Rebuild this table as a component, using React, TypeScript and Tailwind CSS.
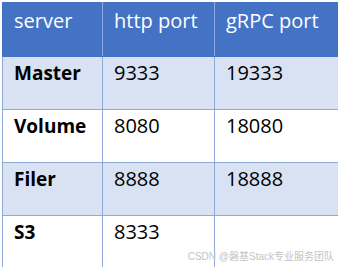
const rows = [
  { server: "Master", http: "9333", grpc: "19333" },
  { server: "Volume", http: "8080", grpc: "18080" },
  { server: "Filer", http: "8888", grpc: "18888" },
  { server: "S3", http: "8333", grpc: "" },
];

export default function App() {
  return (
    <div className="relative w-[338px] h-[267px] overflow-hidden bg-white pl-[2px] pt-[2px] font-['Open_Sans',sans-serif]">
      <table className="border-collapse table-fixed w-[352px] text-[20px] leading-[28px]">
        <colgroup>
          <col className="w-[100px]" />
          <col className="w-[112px]" />
          <col className="w-[140px]" />
        </colgroup>
        <thead>
          <tr className="h-[54px] bg-[#4472c4] text-white">
            <th className="border border-[#4472c4] border-r-[#8eaadb] align-top pt-[4px] pl-[11px] text-left font-normal">server</th>
            <th className="border border-[#4472c4] border-r-[#8eaadb] align-top pt-[4px] pl-[11px] text-left font-normal">http port</th>
            <th className="border border-[#4472c4] align-top pt-[4px] pl-[11px] text-left font-normal">gRPC port</th>
          </tr>
        </thead>
        <tbody>
          {rows.map((r, i) => (
            <tr key={r.server} className={`h-[53px] text-black ${i % 2 === 0 ? "bg-[#d9e2f3]" : "bg-white"}`}>
              <td className="border border-[#8eaadb] align-top pt-[2px] pl-[11px] font-bold text-[19px]">{r.server}</td>
              <td className="border border-[#8eaadb] align-top pt-[2px] pl-[11px]">{r.http}</td>
              <td className="border border-[#8eaadb] align-top pt-[2px] pl-[11px]">{r.grpc}</td>
            </tr>
          ))}
        </tbody>
      </table>
      <div className="absolute right-[4px] bottom-[3px] text-[10px] leading-[14px] text-[#c4c4c4] font-['Liberation_Sans','Noto_Sans_CJK_SC',sans-serif]">
        CSDN @磐基Stack专业服务团队
      </div>
    </div>
  );
}
